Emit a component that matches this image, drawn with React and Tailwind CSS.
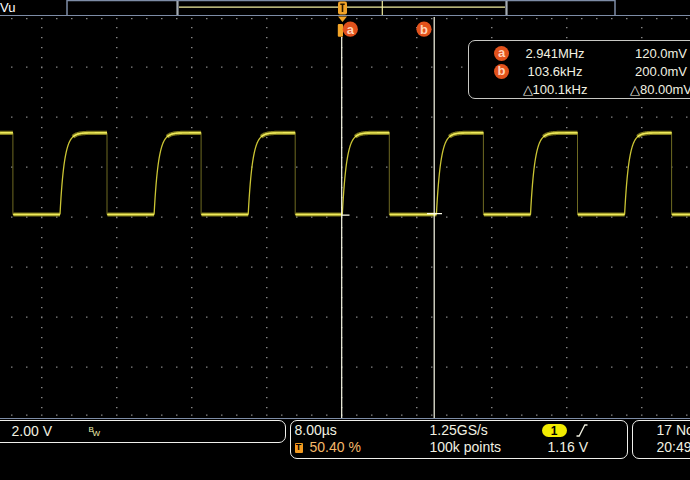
import React from 'react'

const HIGH = 132.8
const LOW = 214.5
const PERIOD = 94.1
const RISE0 = 60
const TAU = 4.3

function buildTrace() {
  let thin = ''
  let thick = ''
  let edges = ''
  for (let k = -1; k <= 7; k++) {
    const xr = RISE0 + k * PERIOD
    const pts = []
    for (let t = 0; t <= 47; t += 0.5) {
      pts.push([xr + t, LOW - (LOW - HIGH) * (1 - Math.exp(-t / TAU))])
    }
    thin += 'M' + pts.map((p) => p[0].toFixed(2) + ' ' + p[1].toFixed(2)).join('L')
    const flat = pts.filter((p) => p[0] - xr >= 13)
    thick += 'M' + flat.map((p) => p[0].toFixed(2) + ' ' + p[1].toFixed(2)).join('L')
    const xf = xr + 47
    edges += `M${xf.toFixed(2)} ${HIGH}V${LOW}`
    thin += `M${xf.toFixed(2)} ${LOW}H${(xr + PERIOD).toFixed(2)}`
    thick += `M${(xf + 0.5).toFixed(2)} ${LOW}H${(xr + PERIOD).toFixed(2)}`
  }
  return { thin, thick, edges }
}

function buildGrid() {
  let d = ''
  const dot = (x, y) => {
    d += `M${x.toFixed(1)} ${y.toFixed(1)}h1.2v1.2h-1.2z`
  }
  const cols = []
  for (let k = 0; k < 9; k++) cols.push(41.2 + 75 * k)
  // vertical graticule lines
  cols.forEach((x) => {
    for (let y = 27; y < 414; y += 10) dot(x, y)
  })
  // horizontal graticule lines + top/bottom edge ticks
  const rows = [18, 66.5, 116.5, 166.5, 216.5, 266.5, 316.5, 366.5, 414.5]
  rows.forEach((y) => {
    for (let x = 11.2; x < 690; x += 15) dot(x, y)
  })
  return d
}

const trace = buildTrace()
const grid = buildGrid()

function CursorTag({ letter }) {
  return (
    <span className="flex h-[15px] w-[15px] items-center justify-center rounded-full bg-[#e2521c] pb-[1px] text-[13px] font-bold leading-none text-[#ffd2b8]">
      {letter}
    </span>
  )
}

function RecordBar() {
  return (
    <svg width="550" height="16" viewBox="0 0 550 16" className="block shrink-0">
      <path d="M0.75 0.6H549.25M1 0V16M549 0V16" stroke="#7d8ca6" strokeWidth="1.5" fill="none" />
      <path d="M111.5 1V15M440.5 1V15" stroke="#a3abb3" strokeWidth="2.2" fill="none" />
      <path d="M113 7.2H439" stroke="#f2eea0" strokeWidth="1.3" />
      <path d="M316.3 1V15" stroke="#f2eea0" strokeWidth="1.2" />
      <rect x="272" y="1.5" width="9" height="13" rx="2" fill="#f2a428" />
      <path d="M274.3 4.2H278.7M276.5 4.2V12" stroke="#2a1800" strokeWidth="1.6" />
    </svg>
  )
}

function Graticule() {
  return (
    <svg width="690" height="401.5" viewBox="0 16 690 401.5" className="block">
      <path d={grid} fill="#a6a6a6" />
      <path d={trace.edges} stroke="#6e6a22" strokeWidth="1" fill="none" />
      <path d={trace.thick} stroke="#9c9626" strokeWidth="4.2" fill="none" opacity="0.8" />
      <path d={trace.thin} stroke="#cbc534" strokeWidth="1.3" fill="none" />
      <path d={trace.thick} stroke="#eeea5c" strokeWidth="1.4" fill="none" />
      {/* cursors */}
      <path d="M341.7 37V418M434.2 17V418" stroke="#fbfbe8" strokeWidth="1.2" />
      <path d="M342 215.2H349.5M427 213.6H442" stroke="#fbfbe8" strokeWidth="1.2" />
      {/* trigger marker */}
      <path d="M338 16.5H347L342.5 22Z" fill="#f2a428" />
      <rect x="337.8" y="24" width="5.2" height="12.8" rx="1" fill="#f2a428" />
      <circle cx="350.3" cy="29.2" r="7.6" fill="#e2521c" />
      <text x="350.3" y="33.6" textAnchor="middle" fontSize="13" fontWeight="700" fill="#ffd2b8" fontFamily="Liberation Sans, Arial, sans-serif">a</text>
      <circle cx="424" cy="29.2" r="7.6" fill="#e2521c" />
      <text x="424" y="33.6" textAnchor="middle" fontSize="13" fontWeight="700" fill="#ffd2b8" fontFamily="Liberation Sans, Arial, sans-serif">b</text>
    </svg>
  )
}

function Readout() {
  const rows = [
    { tag: 'a', f: '2.941MHz', v: '120.0mV' },
    { tag: 'b', f: '103.6kHz', v: '200.0mV' },
    { tag: null, f: '△100.1kHz', v: '△80.00mV' },
  ]
  return (
    <div className="absolute left-[468px] top-[40px] h-[59px] w-[250px] rounded-[7px] border border-[#c8c8c4] bg-black pt-[3px] text-[13px] leading-none text-[#f2f2e2]">
      {rows.map((r, i) => (
        <div key={i} className="flex h-[18px] items-center">
          <span className="ml-[25px] flex w-[15px] justify-center">{r.tag && <CursorTag letter={r.tag} />}</span>
          <span className="ml-[7px] w-[78px] text-center">{r.f}</span>
          <span className="ml-[27px] w-[80px] text-center">{r.v}</span>
        </div>
      ))}
    </div>
  )
}

function SlopeIcon() {
  return (
    <svg width="12" height="13" viewBox="0 0 12 13" className="block">
      <path d="M0.5 12H3.2L8.8 1H11.5" stroke="#f2f2e2" strokeWidth="1.3" fill="none" />
    </svg>
  )
}

export default function App() {
  return (
    <div className="relative h-[480px] w-[690px] overflow-hidden bg-black font-['Liberation_Sans',Arial,sans-serif] text-[#f2f2e2]">
      <div className="flex h-[16px] items-start border-b-[1.5px] border-[#7d8ca6]">
        <div className="w-[66px] pt-[1px] text-[13px] leading-[13px] text-white">Vu</div>
        <RecordBar />
      </div>

      <div className="h-[403px] border-b-[1.5px] border-[#7d8ca6]">
        <Graticule />
      </div>

      <Readout />

      <div className="flex items-start gap-[4px] pt-[1px] text-[14px] leading-[17px]">
        <div className="-ml-[10px] flex h-[22.5px] w-[296px] shrink-0 items-center rounded-[7px] border-[1.5px] border-[#f0f0ec] pl-[20.5px]">
          <span className="w-[77px]">2.00 V</span>
          <span className="relative h-[12px] w-[12px] text-[8px] leading-none text-[#f2f0b0]">
            <span className="absolute left-0 top-[1px]">B</span>
            <span className="absolute left-[4px] top-[5px]">W</span>
          </span>
        </div>

        <div className="flex h-[38.5px] w-[338px] shrink-0 rounded-[7px] border-[1.5px] border-[#f0f0ec] pl-[3.5px] pt-[1px]">
          <div className="w-[135px]">
            <div>8.00µs</div>
            <div className="flex items-center text-[#f4b868]">
              <span className="flex h-[10px] w-[8px] items-center justify-center rounded-[1px] bg-[#f29a20] text-[9px] font-bold leading-none text-black">T</span>
              <span className="ml-[7px]">50.40 %</span>
            </div>
          </div>
          <div className="w-[112px]">
            <div>1.25GS/s</div>
            <div>100k points</div>
          </div>
          <div>
            <div className="flex h-[17px] items-center">
              <span className="flex h-[13px] w-[25px] items-center justify-center rounded-full bg-[#f2ec00] text-[12px] font-bold leading-none text-black">1</span>
              <span className="ml-[9px]">
                <SlopeIcon />
              </span>
            </div>
            <div className="pl-[6px]">1.16 V</div>
          </div>
        </div>

        <div className="h-[38.5px] w-[90px] shrink-0 rounded-[7px] border-[1.5px] border-[#f0f0ec] pl-[23.5px] pt-[1px]">
          <div className="whitespace-nowrap">17 Nov</div>
          <div>20:49</div>
        </div>
      </div>
    </div>
  )
}
